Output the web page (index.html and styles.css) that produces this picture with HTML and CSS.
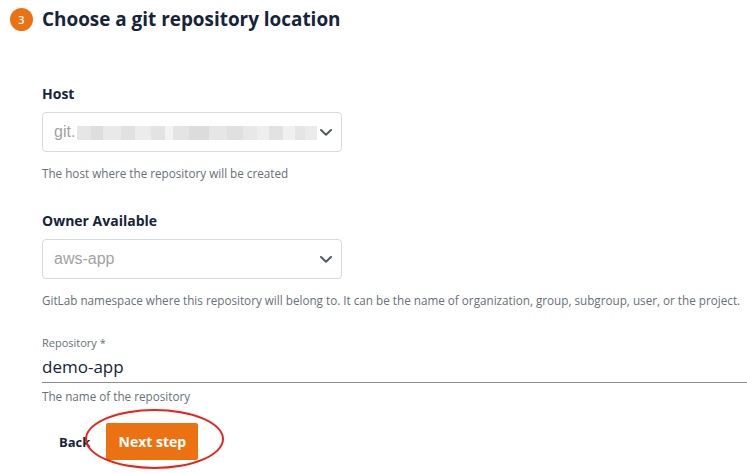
FILE: index.html
```html
<!DOCTYPE html>
<html>
<head>
<meta charset="utf-8">
<link rel="stylesheet" href="styles.css">
</head>
<body>
<div class="page">
  <div class="heading">
    <span class="badge">3</span>
    <h1 class="title">Choose a git repository location</h1>
  </div>
  <div class="form">
    <div class="field field-host">
      <div class="label">Host</div>
      <div class="select">
        <span class="value">git.</span>
        <span class="blur">
          <i style="width:14px;background:#e6e6e6"></i><i style="width:12px;background:#dedede"></i><i style="width:18px;background:#e9e9e9"></i><i style="width:14px;background:#e1e1e1"></i><i style="width:16px;background:#ececec"></i><i style="width:14px;background:#e3e3e3"></i><i style="width:8px;background:#f3f3f3"></i><i style="width:16px;background:#e4e4e4"></i><i style="width:20px;background:#dcdcdc"></i><i style="width:18px;background:#e6e6e6"></i><i style="width:16px;background:#e0e0e0"></i><i style="width:14px;background:#e8e8e8"></i><i style="width:12px;background:#eeeeee"></i><i style="width:14px;background:#e2e2e2"></i><i style="width:12px;background:#f0f0f0"></i><i style="width:10px;background:#e5e5e5"></i><i style="width:12px;background:#ebebeb"></i>
        </span>
        <svg class="chev" width="12" height="7" viewBox="0 0 12 7"><path d="M1 1 L6 5.8 L11 1" fill="none" stroke="#545b64" stroke-width="2" stroke-linecap="round" stroke-linejoin="round"/></svg>
      </div>
      <div class="help">The host where the repository will be created</div>
    </div>
    <div class="field field-owner">
      <div class="label">Owner Available</div>
      <div class="select">
        <span class="value">aws-app</span>
        <svg class="chev" width="12" height="7" viewBox="0 0 12 7"><path d="M1 1 L6 5.8 L11 1" fill="none" stroke="#545b64" stroke-width="2" stroke-linecap="round" stroke-linejoin="round"/></svg>
      </div>
      <div class="help">GitLab namespace where this repository will belong to. It can be the name of organization, group, subgroup, user, or the project.</div>
    </div>
    <div class="field field-repo">
      <div class="small-label">Repository *</div>
      <div class="text-input">demo-app</div>
      <div class="help">The name of the repository</div>
    </div>
    <div class="actions">
      <span class="back">Back</span>
      <span class="next">Next step<span class="ring"></span></span>
    </div>
  </div>
</div>
</body>
</html>
```
FILE: styles.css
```css
html, body {
  margin: 0;
  padding: 0;
  background: #ffffff;
}
body {
  font-family: "Open Sans", "Noto Sans", sans-serif;
  color: #16191f;
  width: 747px;
  height: 473px;
  overflow: hidden;
}
.page {
  padding-top: 8px;
}
.heading {
  display: flex;
  align-items: center;
  gap: 9px;
  margin-left: 10px;
  height: 22px;
}
.badge {
  width: 23px;
  height: 23px;
  border-radius: 50%;
  background: #ec7211;
  color: #fff;
  font-size: 11px;
  font-weight: 600;
  display: flex;
  align-items: center;
  justify-content: center;
  flex-shrink: 0;
}
.title {
  margin: 0;
  font-size: 18.9px;
  font-weight: 700;
  color: #16233b;
  line-height: 22px;
}
.form {
  padding-left: 42px;
}
.field-host {
  margin-top: 54px;
}
.field-owner {
  margin-top: 30px;
}
.field-repo {
  margin-top: 28px;
}
.label {
  font-size: 14px;
  font-weight: 700;
  color: #16233b;
  line-height: 20px;
}
.select {
  margin-top: 8px;
  width: 300px;
  height: 40px;
  box-sizing: border-box;
  border: 1px solid #d5dbdb;
  border-radius: 4px;
  display: flex;
  align-items: center;
  padding: 0 10px 0 11px;
}
.value {
  font-family: "Liberation Sans", Arial, sans-serif;
  font-size: 16px;
  color: #a2a2a2;
}
.blur {
  display: flex;
  height: 14px;
  margin-left: 2px;
  margin-top: 2px;
}
.blur i {
  display: block;
  height: 100%;
}
.chev {
  margin-left: auto;
  margin-right: -1px;
}
.help {
  margin-top: 13px;
  font-size: 11.7px;
  line-height: 16px;
  color: #687078;
  white-space: nowrap;
}
.small-label {
  font-size: 11px;
  line-height: 14px;
  color: #687078;
}
.text-input {
  margin-top: 5px;
  font-size: 17px;
  line-height: 24px;
  color: #16233b;
  border-bottom: 1.5px solid #8c8c8c;
  width: 705px;
  padding-bottom: 3px;
}
.field-repo .help {
  margin-top: 5px;
}
.actions {
  margin-top: 19px;
  display: flex;
  align-items: center;
  gap: 16px;
  padding-left: 17px;
}
.back {
  font-size: 13px;
  font-weight: 700;
  color: #16233b;
}
.next {
  position: relative;
  width: 92px;
  height: 37px;
  border-radius: 2px;
  background: #ec7211;
  color: #fff;
  font-size: 14px;
  font-weight: 700;
  display: flex;
  align-items: center;
  justify-content: center;
}
.ring {
  position: absolute;
  left: -21px;
  top: -14px;
  width: 135px;
  height: 56px;
  border: 2px solid #e8231c;
  border-radius: 50%;
}
```
